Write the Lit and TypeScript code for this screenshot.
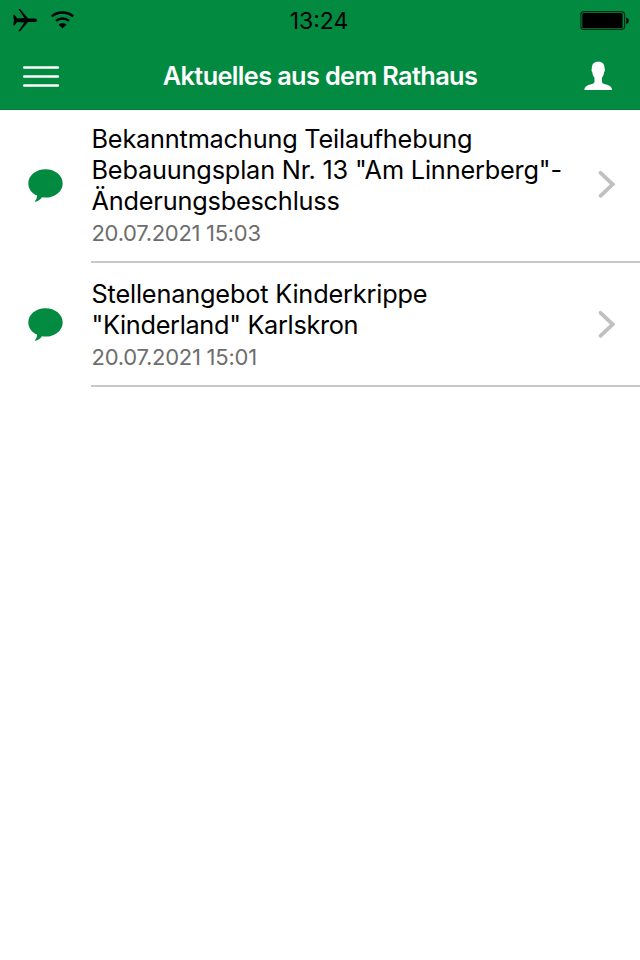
import { LitElement, html, css } from "lit";
import { customElement } from "lit/decorators.js";

interface Line { text: string; spacing: number; }
interface Entry { lines: Line[]; date: Line; }

const ENTRIES: Entry[] = [
  {
    lines: [
      { text: "Bekanntmachung Teilaufhebung", spacing: -0.2 },
      { text: 'Bebauungsplan Nr. 13 "Am Linnerberg"-', spacing: -0.18 },
      { text: "Änderungsbeschluss", spacing: -0.2 },
    ],
    date: { text: "20.07.2021 15:03", spacing: -0.3 },
  },
  {
    lines: [
      { text: "Stellenangebot Kinderkrippe", spacing: -0.18 },
      { text: '"Kinderland" Karlskron', spacing: -0.32 },
    ],
    date: { text: "20.07.2021 15:01", spacing: -0.25 },
  },
];

@customElement("app-root")
export class AppRoot extends LitElement {
  static styles = css`
    :host {
      display: block;
      height: 960px;
      overflow: hidden;
      background: #fff;
      color: #000;
      font-family: Inter, "Liberation Sans", sans-serif;
    }
    svg { display: block; flex: none; }
    header { background: #018a40; height: 110px; box-sizing: border-box; border-bottom: 1px solid #017c39; }
    .status { height: 40px; display: grid; grid-template-columns: 1fr auto 1fr; }
    .status .right { justify-self: end; }
    .time { font-size: 23px; line-height: 42px; padding-right: 2px; }
    .nav { height: 69px; display: grid; grid-template-columns: 80px 1fr 80px; }
    .title {
      margin: 0; text-align: center; color: #fff; white-space: nowrap;
      font-size: 25.3px; line-height: 72px; font-weight: 600; letter-spacing: -0.63px;
    }
    .item { display: flex; align-items: stretch; }
    .lead { width: 91px; display: flex; align-items: center; flex: none; padding-bottom: 4px; }
    .content {
      flex: 1; display: flex; align-items: center; justify-content: space-between;
      border-bottom: 2px solid #c8c7cc; padding: 13px 0 12px 0.5px;
    }
    .content svg { margin-bottom: 4px; }
    .line { font-size: 25.3px; line-height: 31px; white-space: nowrap; }
    .date { font-size: 22px; line-height: 31px; padding-top: 2px; color: #6d6d6d; white-space: nowrap; }
    .item + .item .content { padding-top: 15px; }
    .item + .item .content svg { margin-bottom: 4px; }
    .item + .item .lead { padding-bottom: 3px; }
  `;

  private line(cls: string, l: Line) {
    return html`<div class=${cls} style="letter-spacing:${l.spacing}px">${l.text}</div>`;
  }

  render() {
    return html`
      <header>
        <div class="status">
          <svg width="100" height="40" viewBox="0 0 100 40">
            <path d="M13.200 14.800h1.200l2.900 3.700 7-.5-5.900-8.900h1.600l8.100 9.300h6.400c3.300 0 3.300 3.600 0 3.600h-6.400l-8.100 9.300h-1.600l5.900-8.900-7-.5-2.900 3.700h-1.200l.7-5.400z" />
            <g fill="none" stroke="#000" stroke-width="2.400">
              <path d="M51.800 16.400c6-5.200 15.300-5.200 21.400 0" />
              <path d="M56 20.800c3.600-3 9.400-3 13 0" />
            </g>
            <path d="M58.700 24.700c2-1.800 5.600-1.800 7.600 0l-3.800 3.800z" />
          </svg>
          <div class="time">13:24</div>
          <svg class="right" width="100" height="40" viewBox="0 0 100 40">
            <rect x="40.900" y="11.700" width="43.700" height="17.800" rx="3" fill="none" stroke="#062c14" stroke-width="1.200" />
            <rect x="42.300" y="13" width="40.300" height="15.300" rx="1.500" />
            <path d="M86.300 17.500c3.300 1 3.300 5.500 0 6.500z" />
          </svg>
        </div>
        <div class="nav">
          <svg width="80" height="69" viewBox="0 40 80 69">
            <path d="M24.300 67.500h33.500M24.300 76.500h33.500M24.300 85.500h33.500" stroke="#fff" stroke-width="2.700" stroke-linecap="round" />
          </svg>
          <h1 class="title">Aktuelles aus dem Rathaus</h1>
          <svg width="80" height="69" viewBox="560 40 80 69">
            <path fill="#fff" d="M598.200 61.700c4.300 0 6.500 2.400 6.400 7 .5.700.3 2.700-.5 3.500-.3 2.500-1.100 4.300-2.200 5.500v4.300c.5 3.300 10 1.700 10.200 8h-27.800c.2-6.300 9.700-4.700 10.200-8v-4.300c-1.100-1.200-1.900-3-2.200-5.500-.8-.8-1-2.800-.5-3.500-.1-4.600 2.100-7 6.400-7z" />
          </svg>
        </div>
      </header>
      <main>
        ${ENTRIES.map((e) => html`
          <section class="item">
            <div class="lead">
              <svg width="91" height="40" viewBox="0 165 91 40">
                <path fill="#018a40" d="M45.500 169.200c9.600 0 17.200 6.200 17.200 14.200s-7.600 14.200-17.200 14.200c-1.200 0-2.400-.1-3.500-.3-1.800 2.400-4 4.200-6.800 4.400-.5 0-.5-.4-.2-.8 1.500-1.500 2.100-3.200 2-5.300-5.200-2.300-8.700-6.900-8.700-12.200 0-8 7.600-14.200 17.200-14.200z" />
              </svg>
            </div>
            <div class="content">
              <div>${e.lines.map((l) => this.line("line", l))}${this.line("date", e.date)}</div>
              <svg width="50" height="32" viewBox="590 168.500 50 32">
                <path d="M600.500 173.300l12.200 11.500-12.200 11.500" fill="none" stroke="#c0c0c0" stroke-width="3.800" stroke-linecap="round" />
              </svg>
            </div>
          </section>`)}
      </main>
    `;
  }
}
